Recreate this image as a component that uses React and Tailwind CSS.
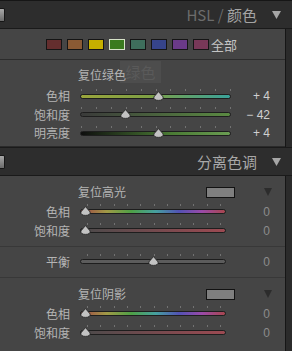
/**
 * Develop panel — HSL / Split toning
 */

const CJK = "font-['Noto_Sans_CJK_SC','Noto_Sans',sans-serif]";

const swatches = [
  { color: "bg-[#642e2e]", border: "border-[#151515]" },
  { color: "bg-[#8a5a34]", border: "border-[#151515]" },
  { color: "bg-[#c6b000]", border: "border-[#151515]" },
  { color: "bg-[#3a7a1e]", border: "border-[#d6e2c8]" },
  { color: "bg-[#3e6e5c]", border: "border-[#151515]" },
  { color: "bg-[#36448a]", border: "border-[#151515]" },
  { color: "bg-[#6a3a88]", border: "border-[#151515]" },
  { color: "bg-[#783858]", border: "border-[#151515]" },
];

const hslRows = [
  { label: "色相", value: "+ 4", pos: 0.52, fill: "bg-[linear-gradient(to_right,#9aa53c,#7fa044_45%,#3aa29a)]" },
  { label: "饱和度", value: "− 42", pos: 0.3, fill: "bg-[linear-gradient(to_right,#3a3a3a,#5a8a42)]" },
  { label: "明亮度", value: "+ 4", pos: 0.52, fill: "bg-[linear-gradient(to_right,#0e0e0e,#4a7a34_60%,#6a9c52)]" },
];

const hueFill =
  "bg-[linear-gradient(to_right,#a04646,#a09a46_18%,#4ea046_35%,#46a0a0_52%,#5252b4_68%,#9a4aa8_84%,#a8464e)]";
const satFill = "bg-[linear-gradient(to_right,#4a4a4a,#9c4a52)]";

function Thumb({ pos, width }) {
  return (
    <svg
      width="11"
      height="10"
      viewBox="0 0 11 10"
      className="absolute top-[-3px]"
      style={{ left: pos * width - 5.5 }}
    >
      <path d="M5.5 0.6 L10.2 6 Q10.4 9.4 5.5 9.4 Q0.6 9.4 0.8 6 Z" fill="#c2c2c2" stroke="#262626" strokeWidth="0.9" />
    </svg>
  );
}

function Track({ width, fill, pos, tickStart, tickEnd }) {
  const ticks = Array.from({ length: 11 }, (_, i) => tickStart + ((tickEnd - tickStart) * i) / 10);
  return (
    <div className="relative h-[5px]" style={{ width }}>
      {ticks.map((x, i) => (
        <div key={i} className="absolute top-[-5px] w-px h-[2px] bg-[#727272]" style={{ left: x }} />
      ))}
      <div className={`h-[5px] rounded-full border border-[#1e1e1e] ${fill}`} />
      <Thumb pos={pos} width={width} />
    </div>
  );
}

function SliderRow({ label, value, pos, fill, width, tickStart, tickEnd, height, valueClass }) {
  return (
    <div className={`flex items-center w-[270px] ${height}`}>
      <div className={`w-[70px] text-right text-[12px] leading-none text-[#b4b4b4] ${CJK}`}>{label}</div>
      <div className="ml-[10px]">
        <Track width={width} fill={fill} pos={pos} tickStart={tickStart} tickEnd={tickEnd} />
      </div>
      <div className={`flex-1 text-right text-[12px] leading-none font-['Liberation_Sans',sans-serif] ${valueClass}`}>
        {value}
      </div>
    </div>
  );
}

function Toggle() {
  return (
    <div className="w-[5px] h-[14px] rounded-r-[2px] border border-l-0 border-[#161616] bg-[linear-gradient(to_bottom,#a8a8a8,#6a6a6a)]" />
  );
}

function Header({ children }) {
  return (
    <div className="flex items-center h-[28px] bg-[#2d2d2d] border-b border-[#1a1a1a]">
      <Toggle />
      <div className={`flex-1 text-right text-[15px] leading-none ${CJK}`}>{children}</div>
      <svg width="9" height="8" viewBox="0 0 9 8" className="ml-[15px] mr-[11px]">
        <path d="M0 0 H9 L4.5 8 Z" fill="#a6a6a6" />
      </svg>
    </div>
  );
}

function ResetRow({ text }) {
  return (
    <div className="flex items-center h-[20px] w-[285px]">
      <div className={`ml-[78px] text-[12px] leading-none text-[#b4b4b4] ${CJK}`}>{text}</div>
      <div className="ml-auto w-[29px] h-[11px] mr-[50px] border border-[#121212] bg-[#7f7f7f]" />
      <svg width="8" height="8" viewBox="0 0 8 8" className="absolute left-[264px]">
        <path d="M0 0 H8 L4 8 Z" fill="#2c2c2c" />
      </svg>
    </div>
  );
}

export default function App() {
  return (
    <div className="w-[292px] h-[351px] overflow-hidden bg-[#2b2b2b] flex flex-col">
      <div className="h-px bg-[#161616]" />
      <Header>
        <span className="text-[#6c6c6c]">HSL / </span>
        <span className="text-[#a4a4a4]">颜色</span>
      </Header>

      {/* HSL panel */}
      <div className="w-[286px] bg-[#454545] border-r border-[#161616]">
        <div className="flex items-center h-[31px] pl-[46px] gap-[5px] border-b border-[#2c2c2c]">
          {swatches.map((s, i) => (
            <div key={i} className={`w-[16px] h-[11px] border ${s.border} ${s.color}`} />
          ))}
          <span className={`ml-[-3px] text-[13px] leading-none text-[#c4c4c4] ${CJK}`}>全部</span>
        </div>
        <div className="relative h-[87px] pt-[5px] border-b border-[#2a2a2a]">
          <div className={`absolute left-[120px] top-[1px] w-[41px] h-[22px] bg-[#4d4d4d] flex items-center justify-center text-[15px] text-[#5a5a5a] ${CJK}`}>
            绿色
          </div>
          <div className="relative flex items-center h-[20px]">
            <div className={`ml-[78px] text-[12px] leading-none text-[#b4b4b4] ${CJK}`}>复位绿色</div>
          </div>
          <div className="mt-[2px]">
            {hslRows.map((r) => (
              <SliderRow
                key={r.label}
                {...r}
                width={151}
                tickStart={1}
                tickEnd={150}
                height="h-[18.5px]"
                valueClass="text-[#d0d0d0]"
              />
            ))}
          </div>
        </div>
      </div>

      <div className="h-px bg-[#1a1a1a]" />
      <Header>
        <span className="text-[#a8a8a8]">分离色调</span>
      </Header>

      {/* Split toning panel */}
      <div className="flex-1 w-[286px] bg-[#454545] border-r border-[#161616]">
        <div className="relative pt-[6px]">
          <ResetRow text="复位高光" />
          <SliderRow label="色相" value="0" pos={0.04} fill={hueFill} width={146} tickStart={7} tickEnd={140} height="h-[19px]" valueClass="text-[#8c8c8c]" />
          <SliderRow label="饱和度" value="0" pos={0.04} fill={satFill} width={146} tickStart={7} tickEnd={140} height="h-[19px]" valueClass="text-[#8c8c8c]" />
        </div>
        <div className="h-[6px]" />
        <div className="h-px bg-[#383838]" />
        <div className="pt-[5px] h-[30px]">
          <SliderRow label="平衡" value="0" pos={0.5} fill="bg-[#5c5c5c]" width={146} tickStart={7} tickEnd={140} height="h-[19px]" valueClass="text-[#8c8c8c]" />
        </div>
        <div className="h-px bg-[#383838]" />
        <div className="relative pt-[6px]">
          <ResetRow text="复位阴影" />
          <SliderRow label="色相" value="0" pos={0.04} fill={hueFill} width={146} tickStart={7} tickEnd={140} height="h-[19px]" valueClass="text-[#8c8c8c]" />
          <SliderRow label="饱和度" value="0" pos={0.04} fill={satFill} width={146} tickStart={7} tickEnd={140} height="h-[19px]" valueClass="text-[#8c8c8c]" />
        </div>
      </div>
    </div>
  );
}
